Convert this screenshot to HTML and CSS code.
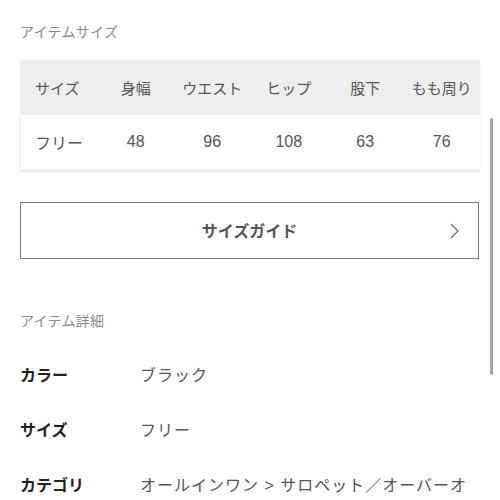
FILE: index.html
```html
<!DOCTYPE html>
<html lang="ja">
<head>
  <meta charset="UTF-8">
  <meta name="viewport" content="width=device-width, initial-scale=1.0">
  <link rel="stylesheet" href="styles.css">
</head>
<body>
  <div class="page">
    <h2 class="section-title">アイテムサイズ</h2>

    <div class="size-table-wrap">
      <table class="size-table">
        <thead>
          <tr>
            <th>サイズ</th>
            <th>身幅</th>
            <th>ウエスト</th>
            <th>ヒップ</th>
            <th>股下</th>
            <th>もも周り</th>
          </tr>
        </thead>
        <tbody>
          <tr>
            <td>フリー</td>
            <td>48</td>
            <td>96</td>
            <td>108</td>
            <td>63</td>
            <td>76</td>
          </tr>
        </tbody>
      </table>
    </div>

    <a class="guide-button" href="#">
      <span>サイズガイド</span>
      <svg class="chevron" width="9" height="16" viewBox="0 0 9 16">
        <polyline points="1,1 8,8 1,15" fill="none" stroke="#666" stroke-width="1.2"/>
      </svg>
    </a>

    <h2 class="section-title detail-title">アイテム詳細</h2>

    <dl class="details">
      <div class="detail-row">
        <dt>カラー</dt>
        <dd>ブラック</dd>
      </div>
      <div class="detail-row">
        <dt>サイズ</dt>
        <dd>フリー</dd>
      </div>
      <div class="detail-row">
        <dt>カテゴリ</dt>
        <dd>オールインワン &gt; サロペット／オーバーオール</dd>
      </div>
    </dl>
  </div>

  <div class="scroll-indicator"></div>
</body>
</html>
```

FILE: styles.css
```css
* {
  box-sizing: border-box;
  margin: 0;
  padding: 0;
}

body {
  font-family: "Liberation Sans", "Noto Sans CJK JP", sans-serif;
  background: #ffffff;
  color: #333;
  overflow: hidden;
}

.page {
  padding: 22px 20px 0 20px;
  width: 500px;
}

.section-title {
  font-size: 14px;
  font-weight: normal;
  line-height: 20px;
  color: #8a8a8a;
  letter-spacing: 0.3px;
}

/* size table */
.size-table-wrap {
  margin-top: 18px;
  width: 460px;
  overflow: hidden;
  box-shadow: 0 1px 2px rgba(0, 0, 0, 0.08);
  border-left: 1px solid #f0f0f0;
}

.size-table {
  width: 100%;
  border-collapse: collapse;
  table-layout: fixed;
  font-size: 15px;
  color: #555;
}

.size-table th,
.size-table td {
  text-align: center;
  font-weight: normal;
  height: 55px;
  white-space: nowrap;
}

.size-table th {
  background: #eeeeee;
}

.size-table td {
  font-size: 16px;
  border-bottom: 1px solid #e6e6e6;
}

.size-table th:first-child,
.size-table td:first-child {
  text-align: left;
  padding-left: 14px;
}

/* size guide button */
.guide-button {
  margin-top: 31px;
  width: 459px;
  height: 57px;
  border: 1px solid #7a7a7a;
  display: flex;
  align-items: center;
  justify-content: center;
  position: relative;
  text-decoration: none;
  color: #555;
  font-size: 16px;
  font-weight: bold;
}

.chevron {
  position: absolute;
  right: 19px;
  top: 20px;
}

.detail-title {
  margin-top: 52px;
}

/* details list */
.details {
  margin-top: 18px;
}

.detail-row {
  display: flex;
  align-items: flex-start;
  padding: 15.5px 0;
  line-height: 24px;
  font-size: 16px;
}

.detail-row dt {
  width: 120px;
  flex-shrink: 0;
  font-weight: bold;
  color: #222;
}

.detail-row dd {
  color: #555;
  letter-spacing: 1px;
}

.scroll-indicator {
  position: fixed;
  left: 490px;
  top: 118px;
  width: 3px;
  height: 257px;
  border-radius: 2px;
  background: #a3a3a3;
}
```
